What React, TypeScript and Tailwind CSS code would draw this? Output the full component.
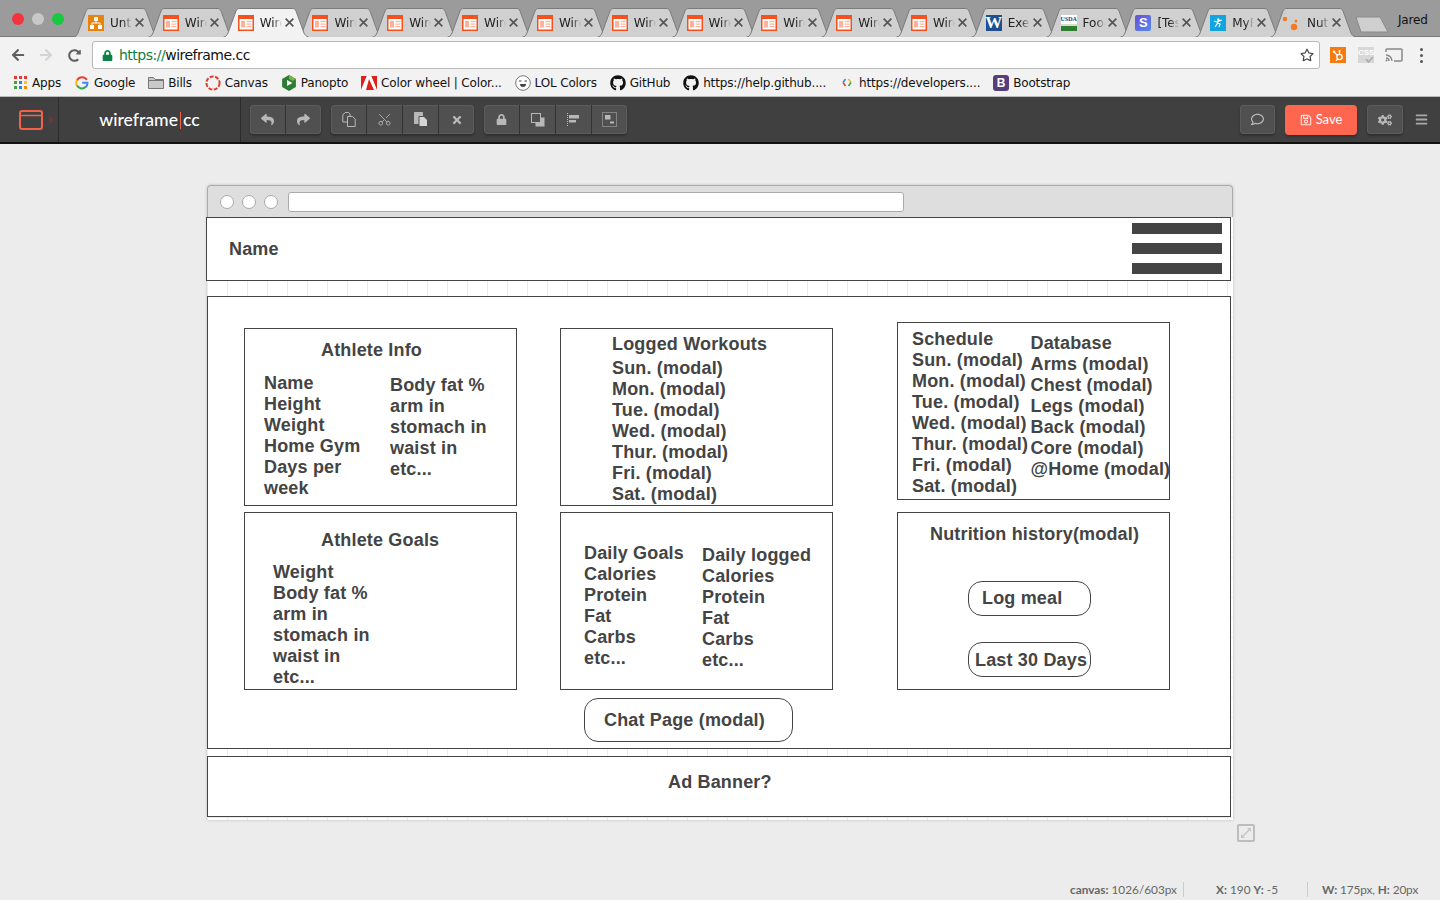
import React from "react";
import { FaReply, FaShare, FaTimes, FaLock, FaRegComment, FaRegSave, FaCogs, FaBars, FaGithub, FaRegStar, FaArrowLeft, FaArrowRight, FaRedoAlt } from "react-icons/fa";
import { Scissors } from "lucide-react";

const ui = "font-['DejaVu_Sans',sans-serif]";
const lato = "font-['Lato',sans-serif]";

function WireFav() {
  return (
    <svg width="16" height="16" viewBox="0 0 16 16" className="shrink-0">
      <rect x="0.75" y="0.75" width="14.5" height="14.5" fill="#fff" stroke="#f4511e" strokeWidth="1.5" />
      <rect x="1" y="1" width="14" height="3" fill="#f4511e" />
      <rect x="3" y="6" width="4" height="6.5" fill="#ffb199" />
      <rect x="8.5" y="6" width="5" height="1.2" fill="#ffb199" />
      <rect x="8.5" y="8.5" width="5" height="1.2" fill="#ffb199" />
      <rect x="8.5" y="11" width="5" height="1.2" fill="#ffb199" />
    </svg>
  );
}

function UntFav() {
  return (
    <svg width="16" height="16" viewBox="0 0 16 16" className="shrink-0">
      <rect width="16" height="16" fill="#e8830c" />
      <rect x="6" y="2" width="4" height="4" fill="#fff" />
      <rect x="2" y="10" width="4" height="4" fill="#fff" />
      <rect x="10" y="10" width="4" height="4" fill="#fff" />
      <path d="M8 6v2M4 10V8h8v2" stroke="#fff" fill="none" />
    </svg>
  );
}

function WordFav() {
  return (
    <div className="w-4 h-4 bg-[#1d4f91] shrink-0 flex items-center justify-center text-white text-[17px] leading-4 font-bold font-['Liberation_Serif',serif]">W</div>
  );
}
function UsdaFav() {
  return (
    <div className="w-4 h-4 shrink-0 flex flex-col bg-white overflow-hidden">
      <div className="h-[9px] text-[#2b3a80] text-[6px] leading-[9px] font-bold text-center font-['Liberation_Serif',serif]">USDA</div>
      <div className="h-[2px] bg-[#cfe3c4]" />
      <div className="h-[5px] bg-[#2e7d32]" />
    </div>
  );
}
function SFav() {
  return (
    <div className="w-4 h-4 rounded-[2px] shrink-0 bg-gradient-to-br from-[#6a4fd0] to-[#4f8af0] flex items-center justify-center text-white text-[13px] font-bold leading-4 font-['Liberation_Sans',sans-serif]">S</div>
  );
}
function MfpFav() {
  return (
    <div className="w-4 h-4 shrink-0 bg-[#0ea5e0] flex items-center justify-center">
      <svg width="10" height="10" viewBox="0 0 10 10"><path d="M1 3l3 1 2-1 3-1M5 4L4 6 2 9M5 5l2 1-1 3M6 1.5a.7.7 0 1 0 0 .1" stroke="#fff" strokeWidth="1.2" fill="none" /></svg>
    </div>
  );
}
function NutFav() {
  return (
    <svg width="16" height="16" viewBox="0 0 16 16" className="shrink-0 -ml-[3px] mr-[3px]">
      <circle cx="3" cy="4" r="2.3" fill="#f57a20" />
      <circle cx="14" cy="6" r="1.5" fill="#f57a20" />
      <circle cx="12" cy="12" r="3.2" fill="#f57a20" />
    </svg>
  );
}

const tabs: { label: string; icon: React.ReactNode; active?: boolean }[] = [
  { label: "Untitled", icon: <UntFav /> },
  { label: "Wireframe", icon: <WireFav /> },
  { label: "Wireframe", icon: <WireFav />, active: true },
  { label: "Wireframe", icon: <WireFav /> },
  { label: "Wireframe", icon: <WireFav /> },
  { label: "Wireframe", icon: <WireFav /> },
  { label: "Wireframe", icon: <WireFav /> },
  { label: "Wireframe", icon: <WireFav /> },
  { label: "Wireframe", icon: <WireFav /> },
  { label: "Wireframe", icon: <WireFav /> },
  { label: "Wireframe", icon: <WireFav /> },
  { label: "Wireframe", icon: <WireFav /> },
  { label: "Exercise", icon: <WordFav /> },
  { label: "Food", icon: <UsdaFav /> },
  { label: "[Test", icon: <SFav /> },
  { label: "MyFitness", icon: <MfpFav /> },
  { label: "Nutrition", icon: <NutFav /> },
];

function Tab({ label, icon, active }: { label: string; icon: React.ReactNode; active?: boolean }) {
  return (
    <div className={active ? "relative z-10 w-[86px] h-[29px] -mr-[11.2px] shrink-0 flex items-center pl-[15px]" : "relative w-[86px] h-[29px] -mr-[11.2px] shrink-0 flex items-center pl-[15px]"}>
      <svg width="86" height="29" viewBox="0 0 86 29" className="absolute inset-0">
        <path d="M0.5 29 C3 29 4 27 5 25 L13 3 C14 1 15 0.5 17 0.5 L69 0.5 C71 0.5 72 1 73 3 L81 25 C82 27 83 28 85.5 29" fill={active ? "#f2f2f2" : "#d0d0d0"} stroke="#7b7b7b" strokeWidth="1" />
      </svg>
      <div className="relative flex items-center">
        {icon}
        <span className={`ml-[6px] w-[22px] overflow-hidden whitespace-nowrap text-[12px] leading-4 text-[#222] ${ui} [mask-image:linear-gradient(to_right,black_60%,transparent)]`}>{label}</span>
        <svg width="11" height="11" viewBox="0 0 10 10" className="ml-[2px]"><path d="M1.5 1.5l7 7M8.5 1.5l-7 7" stroke="#555" strokeWidth="1.5" /></svg>
      </div>
    </div>
  );
}

function Bookmark({ icon, label }: { icon: React.ReactNode; label: string }) {
  return (
    <div className="flex items-center gap-[4px] mr-[12.8px] whitespace-nowrap">
      <div className="w-4 h-4 flex items-center justify-center shrink-0">{icon}</div>
      <span>{label}</span>
    </div>
  );
}

function Seg({ children, last }: { children: React.ReactNode; last?: boolean }) {
  return (
    <div className={last ? "flex-1 min-w-[35px] h-[29px] flex items-center justify-center text-[#b8b8b8]" : "w-[36px] h-[29px] flex items-center justify-center text-[#b8b8b8] border-r border-[#333]"}>
      {children}
    </div>
  );
}
function Group({ children, className = "" }: { children: React.ReactNode; className?: string }) {
  return <div className={`flex rounded-[4px] bg-[#505050] shadow-[inset_0_0_0_1px_#5c5c5c,0_2px_2px_#303030] ${className}`}>{children}</div>;
}

const L = "absolute whitespace-pre text-[18px] leading-[21px] tracking-[0.17px] font-bold text-[#444] font-['Liberation_Sans',sans-serif]";
const B = "absolute border border-[#444] bg-white";

function Lines({ className, lines }: { className: string; lines: string[] }) {
  return (
    <div className={`${L} ${className}`}>
      {lines.map((l) => (
        <div key={l}>{l}</div>
      ))}
    </div>
  );
}

const week = ["Sun. (modal)", "Mon. (modal)", "Tue. (modal)", "Wed. (modal)", "Thur. (modal)", "Fri. (modal)", "Sat. (modal)"];
const measures = ["arm in", "stomach in", "waist in", "etc..."];
const macros = ["Calories", "Protein", "Fat", "Carbs", "etc..."];

export default function App() {
  return (
    <div className="w-[1440px] h-[900px] overflow-hidden flex flex-col bg-[#ececec] relative">
      {/* tab strip */}
      <div className="relative h-[37px] shrink-0 bg-[#9b9b9b] border-b border-[#7b7b7b] pt-[8px] pl-[73px] flex">
        <div className="absolute left-[12px] top-[13px] flex gap-[8px]">
          <div className="w-3 h-3 rounded-full bg-[#f5333f]" />
          <div className="w-3 h-3 rounded-full bg-[#c8c8c8]" />
          <div className="w-3 h-3 rounded-full bg-[#17c93f]" />
        </div>
        {tabs.map((t, i) => (
          <Tab key={i} label={t.label} icon={t.icon} active={t.active} />
        ))}
        <svg width="34" height="17" viewBox="0 0 34 17" className="ml-[10px] mt-[8px] shrink-0">
          <path d="M1 1 L25 1 L33 16 L6 16 Z" fill="#cfcfcf" stroke="#8a8a8a" />
        </svg>
        <div className={`absolute left-[1398px] top-[12px] text-[12px] leading-4 text-[#111] ${ui} tracking-[-0.2px]`}>Jared</div>
      </div>

      {/* address row */}
      <div className="h-[32px] shrink-0 bg-[#f2f2f2] flex items-center pt-[4px]">
        <div className="w-[92px] flex items-center pl-[11px] gap-[14px]">
          <FaArrowLeft className="text-[#5f5f5f]" size={14} />
          <FaArrowRight className="text-[#d4d4d4]" size={14} />
          <FaRedoAlt className="text-[#5f5f5f] ml-[1px]" size={13} />
        </div>
        <div className="w-[1228px] h-[28px] bg-white border border-[#b9b9b9] rounded-[3px] flex items-center pl-[9px] pr-[5px]">
          <FaLock className="text-[#0b8043]" size={11} />
          <div className={`ml-[6px] text-[14px] ${ui} flex-1 tracking-[-0.5px]`}>
            <span className="text-[#0b8043]">https://</span>
            <span className="text-[#111]">wireframe.cc</span>
          </div>
          <FaRegStar className="text-[#444]" size={14} />
        </div>
        <div className="flex items-center ml-[10px]">
          <div className="w-4 h-4 bg-[#f57a10] flex items-center justify-center">
            <svg width="13" height="13" viewBox="0 0 13 13">
              <circle cx="7.5" cy="8" r="2.6" fill="none" stroke="#fff" strokeWidth="1.4" />
              <path d="M7.5 5.4V2.5M5.5 6.2L2.2 3.2M5.6 10L3.8 11.8" stroke="#fff" strokeWidth="1.2" />
              <circle cx="7.5" cy="2" r="1" fill="#fff" />
              <circle cx="2" cy="2.8" r="1.2" fill="#fff" />
            </svg>
          </div>
          <div className="relative w-4 h-4 ml-[12px] bg-[#d8d8d8] text-[#fff] text-[8px] font-bold leading-[11px] text-center font-['Liberation_Sans',sans-serif]">
            CSS
            <svg width="9" height="7" viewBox="0 0 9 7" className="absolute right-0 bottom-0">
              <path d="M1 3l2.5 3L8 1" fill="none" stroke="#aaa" strokeWidth="1.5" />
            </svg>
          </div>
          <svg width="18" height="14" viewBox="0 0 18 14" className="ml-[11px]">
            <path d="M1 4V2a1 1 0 0 1 1-1h14a1 1 0 0 1 1 1v10a1 1 0 0 1-1 1H9" fill="none" stroke="#888" strokeWidth="1.5" />
            <path d="M1 7a6 6 0 0 1 6 6M1 10a3 3 0 0 1 3 3" fill="none" stroke="#888" strokeWidth="1.4" />
            <circle cx="1.5" cy="12.5" r="1" fill="#888" />
          </svg>
          <div className="ml-[17px] flex flex-col gap-[3px]">
            <div className="w-[3px] h-[3px] rounded-full bg-[#555]" />
            <div className="w-[3px] h-[3px] rounded-full bg-[#555]" />
            <div className="w-[3px] h-[3px] rounded-full bg-[#555]" />
          </div>
        </div>
      </div>

      {/* bookmarks */}
      <div className={`h-[28px] shrink-0 bg-[#f2f2f2] border-b border-[#b9b9b9] flex items-center pl-[12px] text-[12px] text-[#111] ${ui} tracking-[-0.15px]`}>
        <Bookmark
          label="Apps"
          icon={
            <svg width="13" height="13" viewBox="0 0 13 13">
              <rect x="0" y="0" width="3" height="3" fill="#e53935" /><rect x="5" y="0" width="3" height="3" fill="#e53935" /><rect x="10" y="0" width="3" height="3" fill="#e53935" />
              <rect x="0" y="5" width="3" height="3" fill="#43a047" /><rect x="5" y="5" width="3" height="3" fill="#1e88e5" /><rect x="10" y="5" width="3" height="3" fill="#fbc02d" />
              <rect x="0" y="10" width="3" height="3" fill="#43a047" /><rect x="5" y="10" width="3" height="3" fill="#1e88e5" /><rect x="10" y="10" width="3" height="3" fill="#fb8c00" />
            </svg>
          }
        />
        <Bookmark
          label="Google"
          icon={
            <svg width="14" height="14" viewBox="0 0 14 14">
              <path d="M11.8 4A5.5 5.5 0 0 0 2 4.5" fill="none" stroke="#ea4335" strokeWidth="2" />
              <path d="M2 4.2a5.5 5.5 0 0 0 0 5.6" fill="none" stroke="#fbbc05" strokeWidth="2" />
              <path d="M2 9.6a5.5 5.5 0 0 0 8.8 1.2" fill="none" stroke="#34a853" strokeWidth="2" />
              <path d="M10.6 11a5 5 0 0 0 1.9-4.2H7.2" fill="none" stroke="#4285f4" strokeWidth="2" />
            </svg>
          }
        />
        <Bookmark
          label="Bills"
          icon={
            <svg width="16" height="13" viewBox="0 0 16 13">
              <path d="M0.5 12.5V1.5h5l1.5 2h8.5v9z" fill="#c9c9c9" stroke="#777" />
              <path d="M0.5 4.5h15" stroke="#777" />
            </svg>
          }
        />
        <Bookmark
          label="Canvas"
          icon={
            <svg width="16" height="16" viewBox="0 0 16 16">
              <circle cx="8" cy="8" r="6.6" fill="none" stroke="#e23d2e" strokeWidth="2" strokeDasharray="4 1.5" />
            </svg>
          }
        />
        <Bookmark
          label="Panopto"
          icon={
            <svg width="16" height="16" viewBox="0 0 16 16">
              <path d="M8 0l6.9 4v8L8 16l-6.9-4V4z" fill="#2e7d32" />
              <path d="M8 0l6.9 4-3 2L8 4z" fill="#7cb342" />
              <path d="M6 5l5.5 3L6 11z" fill="#fff" />
            </svg>
          }
        />
        <Bookmark
          label="Color wheel | Color..."
          icon={
            <svg width="16" height="14" viewBox="0 0 16 14">
              <rect width="16" height="14" fill="#e0201b" />
              <path d="M5.5 0h5L16 14h-3L8 3 5 14H0z" fill="#fff" />
              <path d="M0 0h5.5L0 12zM16 0h-5.5L16 12z" fill="#e0201b" />
            </svg>
          }
        />
        <Bookmark
          label="LOL Colors"
          icon={
            <svg width="16" height="16" viewBox="0 0 16 16">
              <circle cx="8" cy="8" r="7.3" fill="#fff" stroke="#777" />
              <path d="M4 6h2.5M9.5 6H12" stroke="#444" />
              <path d="M5 9h6a3 3 0 0 1-6 0z" fill="#444" />
            </svg>
          }
        />
        <Bookmark label="GitHub" icon={<FaGithub size={16} className="text-[#111]" />} />
        <Bookmark label="https://help.github...." icon={<FaGithub size={16} className="text-[#111]" />} />
        <Bookmark
          label="https://developers...."
          icon={
            <svg width="10" height="9" viewBox="0 0 10 9">
              <path d="M3.5 1L1 4.5" stroke="#4285f4" strokeWidth="1.6" /><path d="M1 4.5L3.5 8" stroke="#ea4335" strokeWidth="1.6" />
              <path d="M6.5 1L9 4.5" stroke="#fbbc05" strokeWidth="1.6" /><path d="M9 4.5L6.5 8" stroke="#34a853" strokeWidth="1.6" />
            </svg>
          }
        />
        <Bookmark
          label="Bootstrap"
          icon={
            <div className="w-4 h-4 rounded-[3px] bg-[#563d7c] text-white text-[12px] leading-4 font-bold text-center font-['Liberation_Sans',sans-serif]">B</div>
          }
        />
      </div>

      {/* app toolbar */}
      <div className="h-[47px] shrink-0 bg-[#404040] border-b-2 border-[#111] flex items-center relative">
        <div className="w-[59px] h-full flex items-center pl-[19px] border-r border-[#2c2c2c]">
          <svg width="24" height="20" viewBox="0 0 24 20">
            <rect x="1" y="1" width="22" height="18" rx="2" fill="none" stroke="#f0634a" strokeWidth="2" />
            <path d="M1 5.5h22" stroke="#f0634a" strokeWidth="1.5" />
          </svg>
          <svg width="6" height="8" viewBox="0 0 6 8" className="ml-[6px]"><path d="M0 0l6 4-6 4z" fill="#6d3a32" /></svg>
        </div>
        <div className={`w-[182px] h-full flex items-center justify-center pt-[1px] border-r border-[#2c2c2c] text-[17.6px] text-white ${lato} font-medium`}>
          wireframe<span className="w-px h-[17px] bg-[#f0634a] mx-[2px]" />cc
        </div>
        <Group className="ml-[9px]">
          <Seg><FaReply size={13} /></Seg>
          <Seg last><FaShare size={13} /></Seg>
        </Group>
        <Group className="ml-[10px]">
          <Seg>
            <svg width="14" height="15" viewBox="0 0 14 15">
              <path d="M3 0.5h3.5l1.5 1.5v3H5.5v5H0.8V3z" fill="none" stroke="#b8b8b8" />
              <path d="M8 4.5h2.5L13.2 7v7.5H5.5v-10z" fill="#505050" stroke="#b8b8b8" />
            </svg>
          </Seg>
          <Seg><Scissors size={15} strokeWidth={1.6} className="-rotate-90 text-[#a8a8a8]" /></Seg>
          <Seg>
            <svg width="14" height="15" viewBox="0 0 14 15">
              <rect x="0" y="0" width="9" height="12" rx="0.5" fill="#b8b8b8" />
              <path d="M5 4.5h5l3.5 3.5v6.5H5z" fill="#d6d6d6" stroke="#505050" />
            </svg>
          </Seg>
          <Seg last><FaTimes size={12} /></Seg>
        </Group>
        <Group className="ml-[10px]">
          <Seg><FaLock size={11} /></Seg>
          <Seg>
            <svg width="14" height="14" viewBox="0 0 14 14">
              <rect x="4.5" y="4.5" width="9" height="9" fill="#b8b8b8" />
              <rect x="0.5" y="0.5" width="9" height="9" fill="#505050" stroke="#b8b8b8" />
            </svg>
          </Seg>
          <Seg>
            <svg width="13" height="14" viewBox="0 0 13 14">
              <path d="M0.5 0v14" stroke="#b8b8b8" strokeDasharray="1 1" />
              <rect x="2" y="2" width="10" height="3.5" fill="#b8b8b8" />
              <rect x="2" y="7" width="7" height="2.5" fill="#b8b8b8" />
            </svg>
          </Seg>
          <Seg last>
            <svg width="15" height="15" viewBox="0 0 15 15">
              <rect x="0.5" y="0.5" width="14" height="14" fill="none" stroke="#b8b8b8" strokeDasharray="1 1" />
              <rect x="3" y="3" width="5.5" height="4.5" fill="#b8b8b8" />
              <rect x="8" y="9.5" width="4" height="2" fill="#b8b8b8" />
            </svg>
          </Seg>
        </Group>
        <div className="flex-1" />
        <Group className="mr-[10px]"><Seg last><FaRegComment size={13} /></Seg></Group>
        <div className={`w-[72px] h-[30px] mr-[10px] rounded-[4px] bg-[#ff6650] text-white text-[13px] flex items-center justify-center gap-[4px] ${lato} shadow-[0_2px_2px_#333]`}>
          <FaRegSave size={12} className="text-[#ffe3dd]" />
          Save
        </div>
        <Group className="mr-[12px] w-[36px]"><Seg last><FaCogs size={14} /></Seg></Group>
        <FaBars size={13} className="text-[#a8a8a8] mr-[12px]" />
      </div>

      {/* workspace */}
      <div className="flex-1 relative">
        <div className="absolute left-[207px] top-[41px] w-[1026px] rounded-t-[4px] shadow-[0_0_3px_#bbb]">
          <div className="h-[32px] bg-[#dedede] border border-b-0 border-[#aaa] rounded-t-[4px] flex items-center pl-[12px]">
            <div className="w-[14px] h-[14px] rounded-full bg-white border border-[#aaa]" />
            <div className="w-[14px] h-[14px] rounded-full bg-white border border-[#aaa] ml-[8px]" />
            <div className="w-[14px] h-[14px] rounded-full bg-white border border-[#aaa] ml-[8px]" />
            <div className="w-[616px] h-[20px] rounded-[3px] bg-white border border-[#aaa] ml-[10px]" />
          </div>
          <div className="relative h-[603px] bg-white bg-[linear-gradient(to_right,#ececec_1px,transparent_1px),linear-gradient(to_bottom,#ececec_1px,transparent_1px)] bg-[size:20px_20px]">
            <div className={`${B} left-[-1px] top-0 w-[1025px] h-[64px]`} />
            <div className={`${L} left-[22px] top-[22px]`}>Name</div>
            <div className="absolute left-[925px] top-[6px] w-[90px] h-[11px] bg-[#444]" />
            <div className="absolute left-[925px] top-[26px] w-[90px] h-[11px] bg-[#444]" />
            <div className="absolute left-[925px] top-[46px] w-[90px] h-[11px] bg-[#444]" />

            <div className={`${B} left-0 top-[79px] w-[1024px] h-[453px]`} />

            <div className={`${B} left-[37px] top-[111px] w-[273px] h-[178px]`} />
            <div className={`${L} left-[114px] top-[123px]`}>Athlete Info</div>
            <Lines className="left-[57px] top-[156px]" lines={["Name", "Height", "Weight", "Home Gym", "Days per", "week"]} />
            <Lines className="left-[183px] top-[158px]" lines={["Body fat %", ...measures]} />

            <div className={`${B} left-[353px] top-[111px] w-[273px] h-[178px]`} />
            <div className={`${L} left-[405px] top-[117px]`}>Logged Workouts</div>
            <Lines className="left-[405px] top-[141px]" lines={week} />

            <div className={`${B} left-[690px] top-[105px] w-[273px] h-[178px]`} />
            <Lines className="left-[705px] top-[112px]" lines={["Schedule", ...week]} />
            <Lines className="left-[823.5px] top-[116px]" lines={["Database", "Arms (modal)", "Chest (modal)", "Legs (modal)", "Back (modal)", "Core (modal)", "@Home (modal)"]} />

            <div className={`${B} left-[37px] top-[295px] w-[273px] h-[178px]`} />
            <div className={`${L} left-[114px] top-[313px]`}>Athlete Goals</div>
            <Lines className="left-[66px] top-[345px]" lines={["Weight", "Body fat %", ...measures]} />

            <div className={`${B} left-[353px] top-[295px] w-[273px] h-[178px]`} />
            <Lines className="left-[377px] top-[326px]" lines={["Daily Goals", ...macros]} />
            <Lines className="left-[495px] top-[328px]" lines={["Daily logged", ...macros]} />

            <div className={`${B} left-[690px] top-[295px] w-[273px] h-[178px]`} />
            <div className={`${L} left-[723px] top-[307px]`}>Nutrition history(modal)</div>

            <div className={`${B} left-[761px] top-[364px] w-[123px] h-[35px] rounded-[14px]`} />
            <div className={`${L} left-[775px] top-[371px]`}>Log meal</div>
            <div className={`${B} left-[761px] top-[425px] w-[123px] h-[35px] rounded-[14px]`} />
            <div className={`${L} left-[768px] top-[433px]`}>Last 30 Days</div>

            <div className={`${B} left-[377px] top-[481px] w-[209px] h-[44px] rounded-[14px]`} />
            <div className={`${L} left-[397px] top-[493px]`}>Chat Page (modal)</div>

            <div className={`${B} left-0 top-[539px] w-[1024px] h-[61px]`} />
            <div className={`${L} left-[461px] top-[555px]`}>Ad Banner?</div>
          </div>
        </div>

        <div className="absolute left-[1237px] top-[680px] w-[18px] h-[18px] border-2 border-[#bdbdbd] rounded-[2px] flex items-center justify-center">
          <svg width="12" height="12" viewBox="0 0 12 12">
            <path d="M7 1h4v4zM1 11V7l4 4z" fill="#c4c4c4" />
            <path d="M9 3L3 9" stroke="#c4c4c4" strokeWidth="1.5" />
          </svg>
        </div>

        <div className={`absolute left-0 right-0 top-[736px] h-[18px] flex items-center text-[11.8px] text-[#666] ${lato} whitespace-pre`}>
          <div className="w-[1184px] flex justify-end">
            <div className="pr-[6px] border-r border-[#ccc] leading-[15px]"><b>canvas:</b> 1026/603px</div>
          </div>
          <div className="w-[124px] pr-[29px] flex justify-end border-r border-[#ccc] leading-[15px]"><span><b>X:</b> 190 <b>Y:</b> -5</span></div>
          <div className="pl-[14px] leading-[15px] tracking-[-0.1px]"><b>W:</b> 175px, <b>H:</b> 20px</div>
        </div>
      </div>
    </div>
  );
}
